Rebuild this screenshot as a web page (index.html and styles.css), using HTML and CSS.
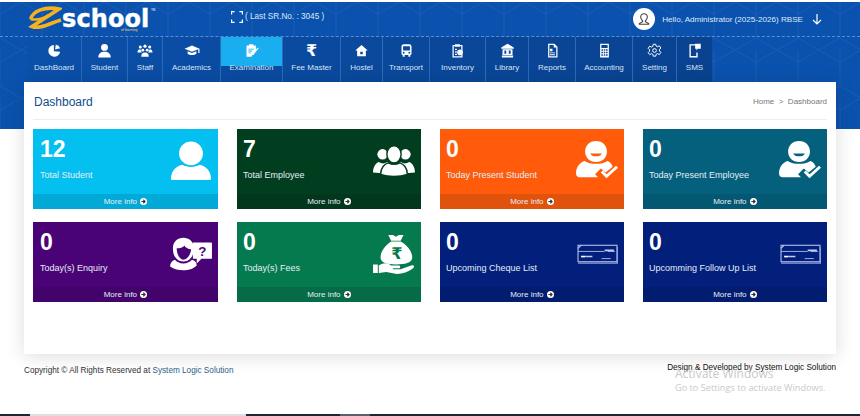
FILE: index.html
```html
<!DOCTYPE html>
<html>
  <head>
    <meta charset="UTF-8" />
    <title>eSchool Dashboard</title>
    <link rel="stylesheet" href="styles.css">
  </head>
  <body>
    <div class="band">
      <header class="topbar">
        <div class="logo">
          <svg class="logo-mark" viewBox="0 0 34 24"><path fill="none" stroke="#f5b21e" stroke-width="3.600" d="M2.500 13C5 5 17 0 31 3L4 20.500c8 3 17-3 29-6.500"/><path fill="none" stroke="#f5b21e" stroke-width="2.600" d="M2.500 13c6 1.500 12 0 18-4"/></svg>
          <span class="logo-text">school</span>
          <span class="logo-tm">TM</span>
          <span class="logo-sub">of learning</span>
        </div>
        <div class="serial">
          <svg class="serial-icon" viewBox="0 0 12 12"><path fill="none" stroke="#fff" stroke-width="1.2" d="M.6 3.5V.6h3M8.4.6h3v2.9M11.4 8.5v2.9h-3M3.6 11.4h-3V8.5"/></svg>
          <span>( Last SR.No. : 3045 )</span>
        </div>
        <div class="user">
          <div class="avatar">
            <svg viewBox="0 0 24 24"><path fill="none" stroke="#444" stroke-width="1.6" d="M12 4a5 5 0 0 1 5 5c0 3-2 5-3 6v1l5 3v1H5v-1l5-3v-1c-1-1-3-3-3-6a5 5 0 0 1 5-5z"/></svg>
          </div>
          <span>Hello, Administrator (2025-2026) RBSE</span>
          <svg class="user-arrow" viewBox="0 0 10 11"><path fill="none" stroke="#fff" stroke-width="1.2" d="M5 0v10M1 6l4 4 4-4"/></svg>
        </div>
      </header>
      <nav class="nav">
        <a class="nav-item"><svg viewBox="0 0 24 24"><path d="M11 3a9.500 9.500 0 1 0 10 11l-10-1z"/><path d="M14 2.500a9 9 0 0 1 7 6l-8 2z"/></svg><span>DashBoard</span></a>
        <a class="nav-item"><svg viewBox="0 0 24 24"><circle cx="12" cy="7" r="5.500"/><path d="M2 23c0-6 4-9 10-9s10 3 10 9z"/></svg><span>Student</span></a>
        <a class="nav-item"><svg class="wide" viewBox="0 0 24 24"><circle cx="12" cy="5" r="2.600"/><circle cx="4.500" cy="6.500" r="2.400"/><circle cx="19.500" cy="6.500" r="2.400"/><circle cx="8.500" cy="11.500" r="2.200"/><circle cx="15.500" cy="11.500" r="2.200"/><path d="M0 15c0-3 2-5 4.500-5L7 15zM24 15c0-3-2-5-4.500-5L17 15zM6 22c0-5 2-7 6-7s6 2 6 7z"/></svg><span>Staff</span></a>
        <a class="nav-item"><svg class="wide" viewBox="0 0 24 24"><path d="M12 4 0 9l12 5 10-4v6h2V9z"/><path d="M5 13v4c3 3 11 3 14 0v-4l-7 3z"/></svg><span>Academics</span></a>
        <a class="nav-item active"><svg viewBox="0 0 24 24"><path d="M4 4h4V2h7v2h4v7l-6 7-1 4H4z"/><path fill="#19aef0" d="M7 9h9v1.500H7zM7 12h6v1.500H7zM7 15h4v1.500H7z"/><path d="m22 7 1.500 1.500L15 19l-3 1 1-3z"/></svg><span>Examination</span></a>
        <a class="nav-item"><span class="rupee">₹</span><span>Fee Master</span></a>
        <a class="nav-item"><svg viewBox="0 0 24 24"><path d="M12 3 2 12h3v9h14v-9h3z"/><rect x="10" y="14" width="4" height="4" fill="#0a489c"/></svg><span>Hostel</span></a>
        <a class="nav-item"><svg viewBox="0 0 24 24"><path fill-rule="evenodd" d="M8 2h8c3 0 4 2 4 4v11c0 1-1 2-2 2H6c-1 0-2-1-2-2V6c0-2 1-4 4-4zM6.500 5v7h11V5zM7.500 14a1.500 1.500 0 1 0 0 3 1.500 1.500 0 0 0 0-3zm9 0a1.500 1.500 0 1 0 0 3 1.500 1.500 0 0 0 0-3z"/><path d="M6 19h3v3H6zM15 19h3v3h-3z"/></svg><span>Transport</span></a>
        <a class="nav-item"><svg viewBox="0 0 24 24"><path fill="none" stroke="#fff" stroke-width="2" d="M8 4H5v18h14V4h-3"/><rect x="8" y="2" width="8" height="4"/><path d="M8 9h3v2H8zM8 13h3v2H8zM8 17h3v2H8z"/><circle cx="16" cy="15" r="4.500"/></svg><span>Inventory</span></a>
        <a class="nav-item"><svg viewBox="0 0 24 24"><path d="M12 1 2 7v2h20V7zM3 20h18v3H3z"/><path fill-rule="evenodd" d="M4 10h16v9H4zm3 2v5h3v-5zm7 0v5h3v-5z"/></svg><span>Library</span></a>
        <a class="nav-item"><svg viewBox="0 0 24 24"><path fill-rule="evenodd" d="M5 1h10l5 5v17H5zm2 2v18h11V7h-4V3zm1 6h4v4H8zm0 6h8v1.500H8zm0 3h8v1.500H8z"/></svg><span>Reports</span></a>
        <a class="nav-item"><svg viewBox="0 0 24 24"><path fill-rule="evenodd" d="M5 1h14v22H5zm2 2v5h10V3zm0 7v2.500h2.500V10zm3.800 0v2.500h2.500V10zm3.700 0v2.500H17V10zM7 14v2.500h2.500V14zm3.800 0v2.500h2.500V14zm3.700 0v2.500H17V14zM7 18v2.500h2.500V18zm3.800 0v2.500h2.500V18zm3.700 0v2.500H17V18z"/></svg><span>Accounting</span></a>
        <a class="nav-item"><svg viewBox="0 0 24 24"><circle cx="12" cy="12" r="3" fill="none" stroke="#fff" stroke-width="1.600"/><path fill="none" stroke="#fff" stroke-width="1.600" d="M10 2h4l.7 3 2.300 1 2.700-1.500 2.500 3.500-2.200 2.200v2.600l2.200 2.200-2.500 3.500-2.700-1.500-2.300 1-.7 3h-4l-.7-3-2.300-1-2.700 1.500L1.800 15.500 4 13.300v-2.600L1.800 8.500l2.500-3.500L7 6.500l2.300-1z"/></svg><span>Setting</span></a>
        <a class="nav-item"><svg viewBox="0 0 24 24"><path fill="none" stroke="#fff" stroke-width="2.200" d="M16 3H5v19h11v-7"/><path d="M13 1h9v8h-5l-2 3V9h-2z"/></svg><span>SMS</span></a>
      </nav>
    </div>

    <main class="panel">
      <div class="panel-head">
        <h1>Dashboard</h1>
        <div class="crumbs">Home &nbsp;&gt;&nbsp; Dashboard</div>
      </div>
      <div class="cards">
        <div class="card c-cyan">
          <div class="card-body">
            <div class="card-text"><b>12</b><span>Total Student</span></div>
            <svg class="card-icon" viewBox="0 0 44 42"><circle cx="22" cy="13" r="12.500"/><path d="M1 40c0-9 6-14 12-15 5 3 13 3 18 0 6 1 12 6 12 15 0 1-1 1-2 1H3c-1 0-2 0-2-1z"/></svg>
          </div>
          <a class="card-foot">More info <svg class="go" viewBox="0 0 8 8"><use href="#go"/></svg></a>
        </div>
        <div class="card c-forest">
          <div class="card-body">
            <div class="card-text"><b>7</b><span>Total Employee</span></div>
            <svg class="card-icon" viewBox="0 0 44 42"><circle cx="10" cy="14" r="5.500"/><circle cx="34" cy="14" r="5.500"/><path d="M0 33c0-6 3-10 6-11 3 2 6 2 9 0l4 4-6 8zM44 33c0-6-3-10-6-11-3 2-6 2-9 0l-4 4 6 8z"/><g class="group-front"><ellipse cx="22" cy="14" rx="7.500" ry="9"/><path d="M8 35c0-7 4-11 8-12 4 2 8 2 12 0 4 1 8 5 8 12-8 3-20 3-28 0z"/></g></svg>
          </div>
          <a class="card-foot">More info <svg class="go" viewBox="0 0 8 8"><use href="#go"/></svg></a>
        </div>
        <div class="card c-orange">
          <div class="card-body">
            <div class="card-text"><b>0</b><span>Today Present Student</span></div>
            <svg class="card-icon" viewBox="0 0 44 42"><use href="#present"/></svg>
          </div>
          <a class="card-foot">More info <svg class="go" viewBox="0 0 8 8"><use href="#go"/></svg></a>
        </div>
        <div class="card c-teal">
          <div class="card-body">
            <div class="card-text"><b>0</b><span>Today Present Employee</span></div>
            <svg class="card-icon" viewBox="0 0 44 42"><use href="#present"/></svg>
          </div>
          <a class="card-foot">More info <svg class="go" viewBox="0 0 8 8"><use href="#go"/></svg></a>
        </div>
        <div class="card c-purple">
          <div class="card-body">
            <div class="card-text"><b>0</b><span>Today(s) Enquiry</span></div>
            <svg class="card-icon" viewBox="0 0 44 42"><path fill-rule="evenodd" d="M14 4c6 0 11 4 11 11 0 4-1 8-3 10-2 3-5 4-8 4s-6-1-8-4c-2-2-3-6-3-10C3 8 8 4 14 4zm-7 11c0 6 3 12 7 12s8-6 8-11c-3 0-6-2-7-4-1 2-5 3-8 3z"/><path d="M5 27c2 2 5 4 9 4s7-2 9-4c4 1 5 4 5 6-4 4-9 5-14 5-5 0-10-1-14-4 0-3 2-6 5-7z"/><path d="M24 9h19c1 0 1 1 1 1v15c0 1 0 1-1 1H33l-5 5v-5h-4z"/><text x="34" y="23" class="enq-mark">?</text></svg>
          </div>
          <a class="card-foot">More info <svg class="go" viewBox="0 0 8 8"><use href="#go"/></svg></a>
        </div>
        <div class="card c-green">
          <div class="card-body">
            <div class="card-text"><b>0</b><span>Today(s) Fees</span></div>
            <svg class="card-icon" viewBox="0 0 44 42"><path d="M16 1h5l3 2 3-2h5l-3 6H19zM19 8h10c7 4 13 11 12 18-1 4-7 6-17 6S9 30 8 26C7 19 13 12 19 8z"/><text x="25" y="26" class="fee-mark">₹</text><path d="M0 32h5v9H0zM6 33c5-3 9-3 13 0h8c2 0 2 3 0 3h-6v1h8l11-4c3-1 4 1 2 3-5 4-11 6-17 6l-11-2-8 1z"/></svg>
          </div>
          <a class="card-foot">More info <svg class="go" viewBox="0 0 8 8"><use href="#go"/></svg></a>
        </div>
        <div class="card c-navy">
          <div class="card-body">
            <div class="card-text"><b>0</b><span>Upcoming Cheque List</span></div>
            <svg class="card-icon cheque" viewBox="0 0 40 20"><use href="#cheque"/></svg>
          </div>
          <a class="card-foot">More info <svg class="go" viewBox="0 0 8 8"><use href="#go"/></svg></a>
        </div>
        <div class="card c-navy">
          <div class="card-body">
            <div class="card-text"><b>0</b><span>Upcomming Follow Up List</span></div>
            <svg class="card-icon cheque" viewBox="0 0 40 20"><use href="#cheque"/></svg>
          </div>
          <a class="card-foot">More info <svg class="go" viewBox="0 0 8 8"><use href="#go"/></svg></a>
        </div>
      </div>
    </main>

    <footer class="footer">
      <div>Copyright © All Rights Reserved at <a>System Logic Solution</a></div>
      <div class="credit">Design &amp; Developed by System Logic Solution</div>
    </footer>

    <div class="activate">
      <div>Activate Windows</div>
      <small>Go to Settings to activate Windows.</small>
    </div>

    <div class="taskbar"><span class="tb-dark"></span><span class="tb-light"></span><span class="tb-mid"></span><span class="tb-grey"></span><span class="tb-rest"></span></div>

    <svg class="defs" width="0" height="0">
      <defs>
        <g id="go">
          <circle cx="4" cy="4" r="4" fill="#fff"/>
          <path fill="none" stroke="#333" stroke-width="1.300" d="M1.600 4h4.200M3.800 2l2 2-2 2"/>
        </g>
        <g id="present">
          <path fill-rule="evenodd" d="M21 0c7 0 11.500 5 11.500 11S28 22 21 22 9.500 17 9.500 11 14 0 21 0zm-6 13c1 4 11 4 12 0z"/>
          <path d="M9 21c6 4 18 4 24 0 3 1 5 4 5.500 6L31 33l-5-4-6 6 3 3H4c-3 0-4-2-4-4 0-6 3-11 9-13z"/>
          <path fill="none" stroke="#fff" stroke-width="3" d="M27 32l5 5 11-10"/>
        </g>
        <g id="cheque" fill="none" stroke="#c3cdf0">
          <path stroke-width="1" d="M1 1h38v16H1z"/>
          <path stroke-width="1.200" stroke="#8d9ddd" d="M1 18.500h38.500V3"/>
          <path stroke-width=".8" d="M1 7h26M30 7h7M24 14h9"/>
          <path stroke-width="1.600" stroke="#fff" d="M4 12h4"/>
          <path stroke-width="1.600" d="M8 12h7M27 6h9"/>
          <path stroke-width="1" d="M1 4l3-3"/>
        </g>
      </defs>
    </svg>
  </body>
</html>
```

FILE: styles.css
```css
* {
  box-sizing: border-box;
}
html, body {
  height: 100%;
}
body {
  margin: 0;
  padding-top: 2px;
  position: relative;
  overflow: hidden;
  background: #fff;
  font-family: "Liberation Sans", Arial, sans-serif;
  color: #333;
}
.band {
  height: 127px;
  background-color: #0b52ae;
  background-image: url("data:image/svg+xml,%3Csvg xmlns='http://www.w3.org/2000/svg' width='42' height='48'%3E%3Cpath fill='none' stroke='%23fff' stroke-opacity='.05' d='M21 0l21 12v24L21 48 0 36V12zM0 12v-12M42 12V0'/%3E%3C/svg%3E");
}
.topbar {
  height: 35px;
  border-bottom: 1px dashed #5d8dcb;
  position: relative;
  display: flex;
  align-items: center;
  color: #dfe9f7;
  font-size: 8.200px;
}
.logo {
  width: 231px;
  padding-left: 28px;
  display: flex;
  align-items: center;
  position: relative;
  height: 100%;
}
.logo-mark {
  width: 34px;
  height: 24px;
  margin-top: -2px;
}
.logo-text {
  color: #fff;
  font: bold 24px/18px "DejaVu Sans", sans-serif;
  letter-spacing: .1px;
  -webkit-text-stroke: .4px #fff;
  margin-top: -1px;
}
.logo-tm {
  position: absolute;
  left: 151px;
  top: 6px;
  font-size: 3px;
  color: #fff;
}
.logo-sub {
  position: absolute;
  left: 121px;
  top: 26px;
  font-size: 3.500px;
  color: #f5d67a;
}
.serial {
  display: flex;
  align-items: center;
  gap: 2px;
  margin-top: -5px;
}
.serial-icon {
  width: 12px;
  height: 12px;
}
.user {
  margin-left: auto;
  margin-right: 38px;
  display: flex;
  align-items: center;
  color: #dfe9f7;
  font-size: 8.100px;
}
.avatar {
  width: 22px;
  height: 22px;
  border-radius: 50%;
  background: #fff;
  margin-right: 7px;
  padding: 3px;
}
.avatar svg {
  display: block;
}
.user-arrow {
  width: 10px;
  height: 11px;
  margin-left: 9px;
}
.nav {
  margin-left: 27px;
  height: 45px;
  display: grid;
  grid-template-columns: 55px 46px 35px 58px 62px 58px 42px 47px 56px 43px 47px 57px 44px 35px;
  width: max-content;
  background: linear-gradient(90deg, #0b50aa, #0a4a9f 40%, #0a4290);
}
.nav-item {
  display: flex;
  flex-direction: column;
  align-items: center;
  padding-top: 6px;
  border-right: 1px solid #2a6cb9;
  color: #d9e5f5;
  font-size: 8px;
  line-height: 10px;
  white-space: nowrap;
}
.nav-item svg {
  width: 15px;
  height: 15px;
  fill: #fff;
  margin-bottom: 5px;
}
.nav-item svg.wide {
  width: 18px;
}
.nav-item.active {
  background: linear-gradient(#19aef0 29px, transparent 29px);
}
.rupee {
  height: 15px;
  margin-bottom: 5px;
  font-size: 16px;
  line-height: 15px;
  font-weight: bold;
  color: #fff;
  font-family: "DejaVu Sans", sans-serif;
}
.nav-item:last-child {
  border-right: 0;
}
.panel {
  margin: -47px 24px 0;
  height: 272px;
  padding: 0 9px;
  background: #fff;
  box-shadow: 0 2px 18px rgba(0, 0, 0, .14);
  position: relative;
}
.panel-head {
  height: 38px;
  border-bottom: 1px solid #eee;
  display: flex;
  align-items: center;
  justify-content: space-between;
}
.panel-head h1 {
  margin: 2px 0 0 1px;
  font-size: 12px;
  font-weight: normal;
  color: #0f4c8a;
}
.crumbs {
  margin-top: 2px;
  font-size: 8px;
  color: #777;
}
.cards {
  margin-top: 9px;
  display: grid;
  grid-template-columns: 185px 184px 184px 184px;
  column-gap: 19px;
  row-gap: 13px;
}
.card {
  height: 80px;
  display: flex;
  flex-direction: column;
  color: #fff;
}
.card-body {
  flex: 1;
  display: flex;
  justify-content: space-between;
  align-items: flex-start;
  padding: 9px 6px 0 6px;
}
.c-cyan .card-body, .c-purple .card-body {
  padding-left: 7px;
}
.card-text b {
  display: block;
  font-size: 23px;
  line-height: 23px;
}
.card-text span {
  display: block;
  margin-top: 9px;
  font-size: 9px;
  line-height: 11px;
  color: #e4eef5;
}
.card-icon {
  width: 42px;
  height: 40px;
  margin-top: 3px;
  fill: #fff;
}
.cheque {
  width: 41px;
  height: 21px;
  margin-top: 13px;
}
.group-front {
  stroke: #013e20;
  stroke-width: 1.500px;
}
.enq-mark {
  font: bold 14px "Liberation Sans", sans-serif;
  text-anchor: middle;
  fill: #4a0377;
}
.fee-mark {
  font: bold 17px "DejaVu Sans", sans-serif;
  text-anchor: middle;
  fill: #057a4f;
}
.card-foot {
  height: 15px;
  line-height: 15px;
  text-align: center;
  font-size: 8px;
  color: #e4eef5;
}
.go {
  width: 7px;
  height: 7px;
  margin-left: 1px;
  vertical-align: -1px;
}
.c-cyan { background: #04c0f0; }
.c-cyan .card-foot { background: #03a9d6; }
.c-forest { background: #013e20; }
.c-forest .card-foot { background: #02361d; }
.c-orange { background: #ff5b0a; }
.c-orange .card-foot { background: #e0530c; }
.c-teal { background: #04607c; }
.c-teal .card-foot { background: #035770; }
.c-purple { background: #4a0377; }
.c-purple .card-foot { background: #42036a; }
.c-green { background: #057a4f; }
.c-green .card-foot { background: #066c47; }
.c-navy { background: #021f7c; }
.c-navy .card-foot { background: #021c70; }
.footer {
  margin: 9px 24px 0;
  display: flex;
  justify-content: space-between;
  font-size: 8.200px;
  color: #333;
}
.footer > div:first-child {
  margin-top: 3px;
}
.footer a {
  color: #2c5f8a;
}
.credit {
  color: #111;
}
.activate {
  position: absolute;
  left: 675px;
  top: 366px;
  font-family: "Open Sans", sans-serif;
  font-size: 12px;
  line-height: 16px;
  color: #c9c9c9;
}
.activate small {
  display: block;
  font-size: 9.200px;
  line-height: 12px;
  margin-top: 0;
}
.taskbar {
  position: absolute;
  left: 0;
  right: 0;
  bottom: 0;
  height: 2px;
  display: flex;
}
.tb-dark {
  width: 30px;
  background: #1c2733;
}
.tb-light {
  width: 216px;
  background: #dde0e3;
}
.tb-mid {
  width: 94px;
  background: #1c2733;
}
.tb-grey {
  width: 30px;
  background: #5a6068;
}
.tb-rest {
  flex: 1;
  background: #1c2733;
}
.defs {
  position: absolute;
}
```
